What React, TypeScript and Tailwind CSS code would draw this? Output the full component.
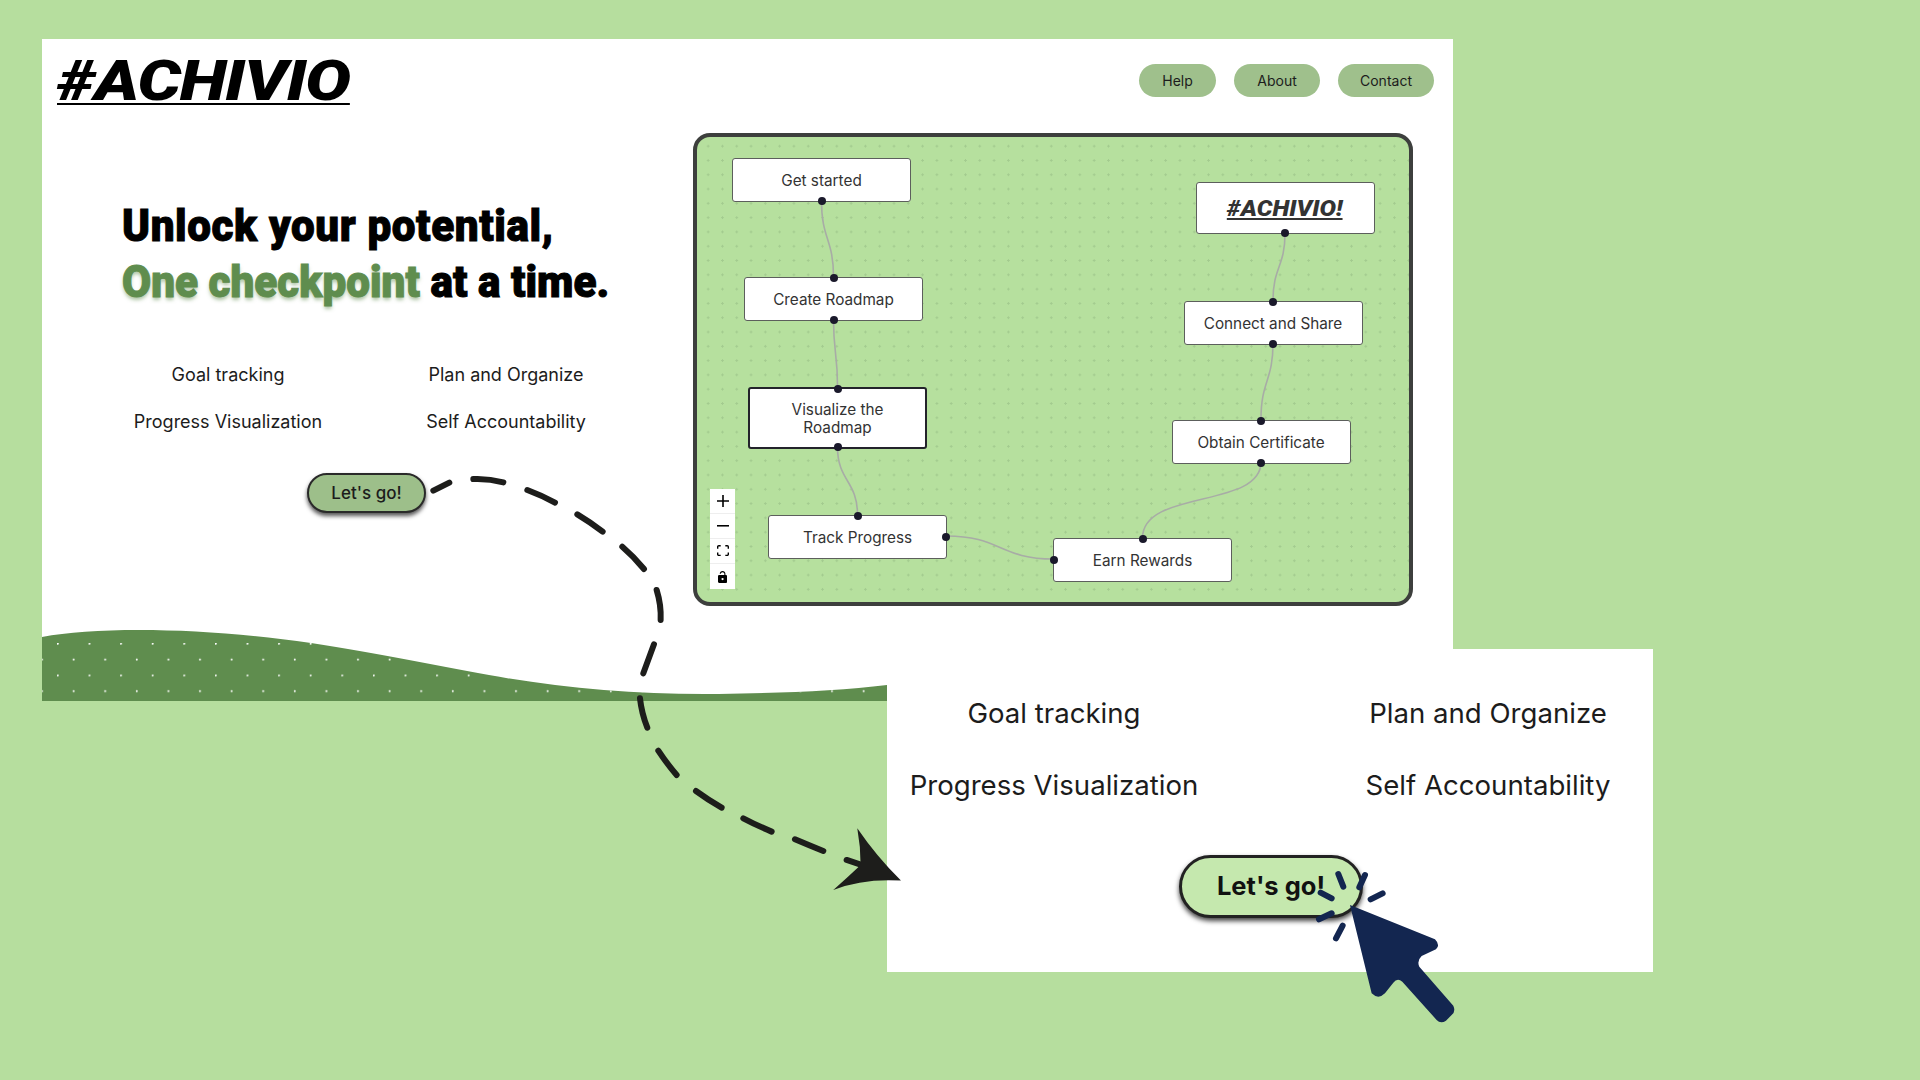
const sans = "font-['Inter','Noto_Sans',sans-serif]";

type NodeProps = {
  label: string;
  pos: string;
  box: string;
  handles: ("t" | "b" | "l" | "r")[];
  strong?: boolean;
  logo?: boolean;
};

const handleClass = {
  t: "left-1/2 top-0",
  b: "left-1/2 top-full",
  l: "left-0 top-1/2",
  r: "left-full top-1/2",
};

function FlowNode({ label, pos, box, handles, strong, logo }: NodeProps) {
  return (
    <div
      className={`absolute ${pos} ${box} flex items-center justify-center rounded-[3px] bg-white px-3 text-center text-[#333333] ${
        strong ? "border-2 border-[#23232b]" : "border-[1.5px] border-[#5c5f5c]"
      }`}
    >
      {logo ? (
        <span className="inline-block scale-x-[1.12] font-['Roboto',sans-serif] text-[22px] font-black italic underline">{label}</span>
      ) : (
        <span className={`pt-[2px] text-[15.3px] leading-[18px] ${strong ? "px-3" : ""}`}>{label}</span>
      )}
      {handles.map((h) => (
        <span
          key={h}
          className={`absolute ${handleClass[h]} h-[8px] w-[8px] -translate-x-1/2 -translate-y-1/2 rounded-full bg-[#1a192b]`}
        />
      ))}
    </div>
  );
}

function ControlButton({ children, last }: { children: React.ReactNode; last?: boolean }) {
  return (
    <div className={`flex h-[25px] w-[25px] items-center justify-center bg-white ${last ? "" : "border-b border-[#eeeeee]"}`}>
      {children}
    </div>
  );
}

function FlowPanel() {
  const edges = [
    "M821.5 202C821.5 240 833.5 240 833.5 277.5",
    "M833.5 320.5C833.5 354 837.5 354 837.5 387",
    "M837.5 448C837.5 482 857.5 482 857.5 515.5",
    "M946.5 537C1000 537 1000 560 1053.5 560",
    "M1142.5 539C1142.5 490 1261 510 1261 463",
    "M1261 420C1261 382 1273 382 1273 344.5",
    "M1273 301.5C1273 268 1285 268 1285 234.5",
  ];
  return (
    <div className="relative h-[473px] w-[720px] rounded-[17px] border-4 border-[#3d3f3d] bg-[#b6e09e] bg-[radial-gradient(#a3cb8f_1px,transparent_1px)] bg-[size:14.3px_14.3px] bg-[position:4px_2px]">
      <svg className="absolute left-0 top-0 h-full w-full" viewBox="697 138 712 465" fill="none">
        {edges.map((d) => (
          <path key={d} d={d} stroke="#a8aca6" strokeWidth="1.6" />
        ))}
      </svg>
      <FlowNode label="Get started" pos="left-[35px] top-[21px]" box="w-[179px] h-[44px]" handles={["b"]} />
      <FlowNode label="Create Roadmap" pos="left-[47px] top-[140px]" box="w-[179px] h-[44px]" handles={["t", "b"]} />
      <FlowNode label="Visualize the Roadmap" pos="left-[51px] top-[249.5px]" box="w-[179px] h-[62px]" handles={["t", "b"]} strong />
      <FlowNode label="Track Progress" pos="left-[71px] top-[378px]" box="w-[179px] h-[44px]" handles={["t", "r"]} />
      <FlowNode label="Earn Rewards" pos="left-[356px] top-[401px]" box="w-[179px] h-[44px]" handles={["t", "l"]} />
      <FlowNode label="#ACHIVIO!" pos="left-[498.5px] top-[45px]" box="w-[179px] h-[52px]" handles={["b"]} logo />
      <FlowNode label="Connect and Share" pos="left-[486.5px] top-[164px]" box="w-[179px] h-[44px]" handles={["t", "b"]} />
      <FlowNode label="Obtain Certificate" pos="left-[474.5px] top-[282.5px]" box="w-[179px] h-[44px]" handles={["t", "b"]} />
      <div className="absolute left-[13px] top-[352px] flex flex-col">
        <ControlButton>
          <svg viewBox="0 0 32 32" className="h-[12px] w-[12px]">
            <path d="M32 18.133H18.133V32h-4.266V18.133H0v-4.266h13.867V0h4.266v13.867H32z" />
          </svg>
        </ControlButton>
        <ControlButton>
          <svg viewBox="0 0 32 5" className="w-[12px]">
            <path d="M0 0h32v4.2H0z" />
          </svg>
        </ControlButton>
        <ControlButton>
          <svg viewBox="0 0 32 30" className="w-[12px]">
            <path d="M3.692 4.63c0-.53.4-.938.939-.938h5.215V0H4.708C2.13 0 0 2.054 0 4.63v5.216h3.692V4.631zM27.354 0h-5.2v3.692h5.17c.53 0 .984.4.984.939v5.215H32V4.631A4.624 4.624 0 0027.354 0zm.954 24.83c0 .532-.4.94-.939.94h-5.215v3.768h5.215c2.577 0 4.631-2.13 4.631-4.707v-5.139h-3.692v5.139zm-23.677.94c-.531 0-.939-.4-.939-.94v-5.138H0v5.139c0 2.577 2.13 4.707 4.708 4.707h5.138V25.77H4.631z" />
          </svg>
        </ControlButton>
        <ControlButton last>
          <svg viewBox="0 0 25 32" className="h-[12px]">
            <path d="M21.333 10.667H19.81V7.619C19.81 3.429 16.38 0 12.19 0c-4.114 0-7.619 3.429-7.619 7.619v0h3.048c0-2.59 2.01-4.571 4.571-4.571 2.59 0 4.724 1.98 4.724 4.571v3.048H3.047A3.056 3.056 0 000 13.714v15.238A3.056 3.056 0 003.048 32h18.285a3.056 3.056 0 003.048-3.048V13.714a3.056 3.056 0 00-3.048-3.047zM12.19 24.533a3.056 3.056 0 01-3.047-3.047 3.056 3.056 0 013.047-3.048 3.056 3.056 0 013.048 3.048 3.056 3.056 0 01-3.048 3.047z" />
          </svg>
        </ControlButton>
      </div>
    </div>
  );
}

function Wave() {
  const d =
    "M42 637C100 626 210 628 311 643C380 654 430 664 489 675C560 688 640 695 719 694C780 693 840 691 887 685V701H42Z";
  return (
    <svg className="mt-auto block h-[75px] w-[845px] shrink-0" viewBox="42 626 845 75">
      <defs>
        <pattern id="dots" patternUnits="userSpaceOnUse" x="57" y="643" width="31.6" height="31.6">
          <circle cx="0.8" cy="0.8" r="1" fill="#ffffff" />
          <circle cx="16.6" cy="16.6" r="1" fill="#ffffff" />
        </pattern>
      </defs>
      <path d={d} fill="#5f8d4e" />
      <path d={d} fill="url(#dots)" />
    </svg>
  );
}

function Features() {
  const items = ["Goal tracking", "Plan and Organize", "Progress Visualization", "Self Accountability"];
  return (
    <>
      {items.map((t) => (
        <div key={t} className="text-center whitespace-nowrap">
          {t}
        </div>
      ))}
    </>
  );
}

function Overlay() {
  return (
    <svg className="pointer-events-none absolute left-0 top-0 h-[1080px] w-[1920px]" viewBox="0 0 1920 1080" fill="none">
      <g transform="translate(420 450) scale(0.3333)" stroke="#1d1d1b" strokeWidth="18" strokeLinecap="round">
        <path d="M40 122L88 98" />
        <path d="M160 87Q205 85 250 97" />
        <path d="M322 120Q365 136 405 158" />
        <path d="M472 193Q512 217 548 245" />
        <path d="M607 290Q642 320 672 357" />
        <path d="M710 420Q724 465 722 510" />
        <path d="M702 583Q686 627 670 670" />
        <path d="M660 745Q665 790 682 833" />
        <path d="M715 902Q740 940 770 975" />
        <path d="M828 1023Q865 1050 905 1073" />
        <path d="M970 1105Q1010 1126 1055 1145" />
        <path d="M1125 1168Q1167 1186 1210 1203" />
        <path d="M1280 1230L1320 1243" />
        <path
          d="M1312 1135Q1370 1220 1443 1292Q1330 1285 1240 1320Q1285 1280 1322 1245Q1322 1190 1312 1135Z"
          fill="#1d1d1b"
          stroke="none"
        />
      </g>
      <g transform="translate(1150 830) scale(0.3333)" stroke="#132650" strokeLinecap="round">
        <path d="M565 132L580 170M645 135L628 172M698 190L662 208M512 188L545 205M507 268L545 250M578 287L558 325" strokeWidth="18" />
        <path
          d="M600 225L855 328Q872 345 858 358L815 378Q800 392 808 410L910 527Q918 545 905 555L888 572Q872 582 860 570L757 455Q742 443 730 458L705 490Q685 510 665 490Z"
          fill="#132650"
          stroke="none"
        />
      </g>
    </svg>
  );
}

export default function App() {
  return (
    <div className={`relative h-[1080px] w-[1920px] overflow-hidden bg-[#b6de9e] pt-[39px] text-[#1c1c1c] ${sans}`}>
      <div className="ml-[42px] flex h-[662px] w-[1411px] flex-col bg-white">
        <header className="flex h-[83px] shrink-0 items-center justify-between pl-[15px] pr-[19px]">
          <div className="origin-left scale-x-[1.22] font-['Roboto',sans-serif] text-[56px] font-black italic leading-none tracking-[-1px] text-black underline decoration-2 underline-offset-[3px]">
            #ACHIVIO
          </div>
          <nav className="flex gap-[18px] text-[14px]">
            <span className="flex h-[33px] w-[77px] items-center justify-center rounded-full bg-[#9fc08c]">Help</span>
            <span className="flex h-[33px] w-[86px] items-center justify-center rounded-full bg-[#9fc08c]">About</span>
            <span className="flex h-[33px] w-[96px] items-center justify-center rounded-full bg-[#9fc08c]">Contact</span>
          </nav>
        </header>
        <main className="flex pt-[11px]">
          <section className="w-[651px] shrink-0">
            <h1 className="ml-[80px] mt-[65px] origin-left scale-x-[0.96] whitespace-nowrap font-['Roboto',sans-serif] text-[44px] font-black leading-[56px] text-black [-webkit-text-stroke:1px_black]">
              <span className="tracking-[0.6px]">Unlock your potential,</span>
              <br />
              <span className="text-[#5f8d4e] [-webkit-text-stroke:1px_#5f8d4e] [text-shadow:0_3px_4px_rgba(95,141,78,0.5)]">
                One checkpoint
              </span>{" "}
              at a time.
            </h1>
            <div className="ml-[47px] mt-[53px] grid w-[556px] grid-cols-2 gap-y-[23px] text-[18px] leading-[24px]">
              <Features />
            </div>
            <button className="ml-[265px] mt-[39px] flex h-[40px] w-[119px] items-center justify-center rounded-full border-2 border-[#2a2a2a] bg-[#9dbf8a] pt-[1px] text-[17px] font-medium shadow-[0_3px_4px_#555555]">
              Let's go!
            </button>
          </section>
          <FlowPanel />
        </main>
        <Wave />
      </div>

      <div className="absolute left-[887px] top-[649px] h-[323px] w-[766px] bg-white pt-[46px]">
        <div className="grid grid-cols-[334px_266px] gap-x-[134px] gap-y-[36px] text-[27.6px] leading-[36px]">
          <Features />
        </div>
        <button className="ml-[292px] mt-[52px] flex h-[63px] w-[184px] items-center justify-center rounded-full border-[3px] border-[#222222] bg-[#c5e8ae] text-[25.5px] font-bold text-[#111111] shadow-[0_3px_5px_#444444]">
          Let's go!
        </button>
      </div>

      <Overlay />
    </div>
  );
}
